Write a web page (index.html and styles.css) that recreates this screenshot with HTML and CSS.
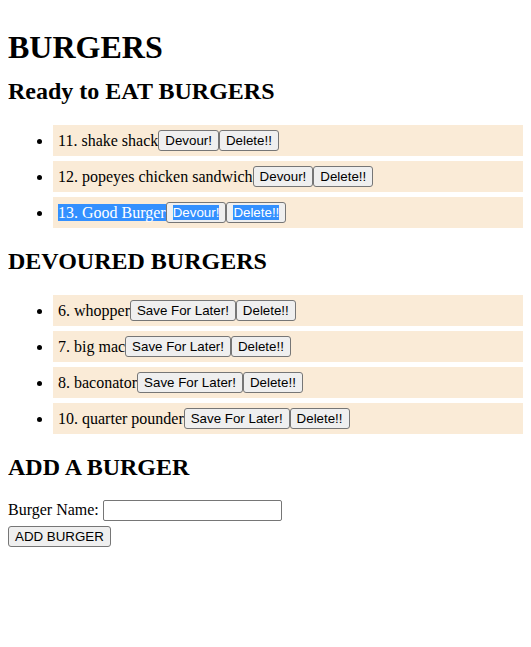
FILE: index.html
```html
<!DOCTYPE html>
<html>
<head>
<meta charset="utf-8">
<title>Burgers</title>
<link rel="stylesheet" href="styles.css">
</head>
<body>
<h1>BURGERS</h1>
<h2 class="lead">Ready to EAT BURGERS</h2>
<ul class="list">
  <li class="item">11. shake shack<button class="btn">Devour!</button><button class="btn">Delete!!</button></li>
  <li class="item">12. popeyes chicken sandwich<button class="btn">Devour!</button><button class="btn">Delete!!</button></li>
  <li class="item"><span class="sel">13. Good Burger</span><button class="btn"><span class="sel">Devour!</span></button><button class="btn"><span class="sel">Delete!!</span></button></li>
</ul>
<h2>DEVOURED BURGERS</h2>
<ul class="list">
  <li class="item">6. whopper<button class="btn">Save For Later!</button><button class="btn">Delete!!</button></li>
  <li class="item">7. big mac<button class="btn">Save For Later!</button><button class="btn">Delete!!</button></li>
  <li class="item">8. baconator<button class="btn">Save For Later!</button><button class="btn">Delete!!</button></li>
  <li class="item">10. quarter pounder<button class="btn">Save For Later!</button><button class="btn">Delete!!</button></li>
</ul>
<h2>ADD A BURGER</h2>
<form class="form">
  <label class="label">Burger Name: <input class="input" type="text"></label><br>
  <button class="btn add" type="button">ADD BURGER</button>
</form>
</body>
</html>
```
FILE: styles.css
```css
html {
  background: #ffffff;
}
body {
  margin: 8px;
  font-family: "Liberation Serif", "Times New Roman", serif;
  font-size: 16px;
  color: #000;
}
h1 {
  font-size: 32px;
  margin: 21.44px 0 11.44px;
}
h2 {
  font-size: 24px;
  margin: 19.92px 0;
}
.lead {
  margin-top: 0;
}
.list {
  margin: 16px 0;
  padding-left: 40px;
}
.item {
  background: #faebd7;
  margin: 5px -8px 5px 5px;
  padding: 5px;
  line-height: 21px;
}
.btn {
  font-family: "Liberation Sans", Arial, sans-serif;
  font-size: 13.333px;
  color: #000;
  background: #efefef;
  border: 1px solid #767676;
  border-radius: 3px;
  padding: 2px 6px;
  margin: 0;
  line-height: 15px;
  vertical-align: top;
}
.sel {
  background: #3390ff;
  color: #fff;
}
.form {
  margin: 0;
}
.input {
  font-family: "Liberation Sans", Arial, sans-serif;
  font-size: 13.333px;
  width: 173px;
  height: 17px;
  padding: 1px 2px;
  border: 1px solid #767676;
  border-radius: 2px;
  margin: 0;
}
.add {
  margin-top: 5px;
  vertical-align: baseline;
}
```
